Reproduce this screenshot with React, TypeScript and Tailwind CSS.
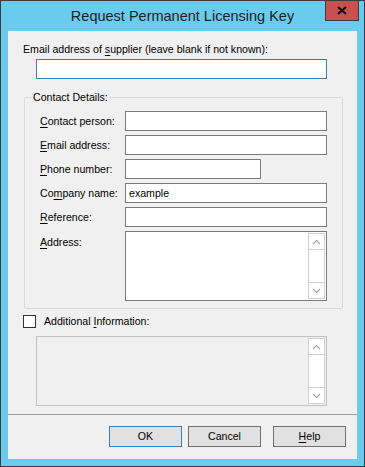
import React from 'react';

function Chevron({ up }: { up?: boolean }) {
  return (
    <svg width="9" height="6" viewBox="0 0 9 6" className="block">
      <polyline
        points={up ? '1,5 4.5,1.5 8,5' : '1,1 4.5,4.5 8,1'}
        fill="none"
        stroke="#a6a6a6"
        strokeWidth="1.2"
      />
    </svg>
  );
}

function ScrollBar() {
  return (
    <div className="flex h-full w-[17px] flex-col border border-[#cfcfcf] bg-white">
      <div className="flex h-[16px] items-center justify-center border-b border-[#cfcfcf]">
        <Chevron up />
      </div>
      <div className="flex-1" />
      <div className="flex h-[16px] items-center justify-center border-t border-[#cfcfcf]">
        <Chevron />
      </div>
    </div>
  );
}

function Row({ u, rest, pre = '', width = 'w-[202px]', value = '' }: {
  u: string;
  rest: string;
  pre?: string;
  width?: string;
  value?: string;
}) {
  return (
    <div className="flex h-[20px] items-center">
      <div className="w-[85px]">
        {pre}
        <span className="underline underline-offset-[2px]">{u}</span>
        {rest}
      </div>
      <div className={`h-[20px] ${width} border border-[#7a7a7a] bg-white pl-[3px] leading-[18px]`}>{value}</div>
    </div>
  );
}

function Button({ children, primary }: { children: React.ReactNode; primary?: boolean }) {
  return (
    <div
      className={`flex h-[21px] w-[73px] items-center justify-center border bg-[#e1e1e1] ${
        primary ? 'border-[#3c7fb1]' : 'border-[#707070]'
      }`}
    >
      {children}
    </div>
  );
}

export default function App() {
  return (
    <div className="flex h-[467px] w-[365px] flex-col border border-[#3b3b3b] bg-[#69cbed] font-['Liberation_Sans',Arial,sans-serif] text-[10.6px] leading-[13px] text-[#000]">
      {/* Title bar */}
      <div className="relative flex h-[30px] items-center justify-center text-[14.5px] text-[#1e1e1e]">
        Request Permanent Licensing Key
        <div className="absolute right-[5px] top-[-1px] flex h-[21px] w-[34px] items-center justify-center border border-[#3b3b3b] bg-[#c75050]">
          <svg width="10" height="9" viewBox="0 0 10 9">
            <path d="M1 1 L9 8 M9 1 L1 8" stroke="#111" strokeWidth="2.2" />
          </svg>
        </div>
      </div>

      {/* Client area */}
      <div className="mx-[7px] flex h-[428px] flex-col bg-[#f0f0f0]">
        <div className="ml-[15px] mt-[12px]">
          Email address of <span className="underline underline-offset-[2px]">s</span>upplier (leave blank if not known):
        </div>
        <div className="ml-[28px] mt-[3px] h-[20px] w-[291px] border border-[#3c7fb1] bg-white" />

        {/* Contact details group */}
        <div className="relative ml-[16px] mt-[18px] h-[212px] w-[319px] rounded-[2px] border border-[#d9d9d9]">
          <span className="absolute left-[7px] top-[-7px] bg-[#f0f0f0] px-[1px]">Contact Details:</span>
          <div className="flex flex-col gap-[4px] pl-[15px] pt-[13px]">
            <Row u="C" rest="ontact person:" />
            <Row u="E" rest="mail address:" />
            <Row u="P" rest="hone number:" width="w-[136px]" />
            <Row pre="Co" u="m" rest="pany name:" value="example" />
            <Row u="R" rest="eference:" />
            <div className="flex">
              <div className="w-[85px] pt-[5px]">
                <span className="underline underline-offset-[2px]">A</span>ddress:
              </div>
              <div className="flex h-[70px] w-[202px] justify-end border border-[#7a7a7a] bg-white p-[1px]">
                <ScrollBar />
              </div>
            </div>
          </div>
        </div>

        {/* Additional information */}
        <div className="ml-[15px] mt-[6px] flex items-center">
          <div className="h-[13px] w-[13px] border border-[#333] bg-white" />
          <span className="ml-[8px]">
            Additional <span className="underline underline-offset-[2px]">I</span>nformation:
          </span>
        </div>
        <div className="ml-[28px] mt-[8px] flex h-[70px] w-[291px] justify-end border border-[#c2c2c2] p-[1px]">
          <ScrollBar />
        </div>

        <div className="mt-[8px] border-t border-[#a0a0a0]" />

        <div className="mr-[11px] mt-[11px] flex justify-end">
          <Button primary>OK</Button>
          <div className="ml-[6px]">
            <Button>Cancel</Button>
          </div>
          <div className="ml-[12px]">
            <Button>
              <span>
                <span className="underline underline-offset-[2px]">H</span>elp
              </span>
            </Button>
          </div>
        </div>
      </div>
    </div>
  );
}
